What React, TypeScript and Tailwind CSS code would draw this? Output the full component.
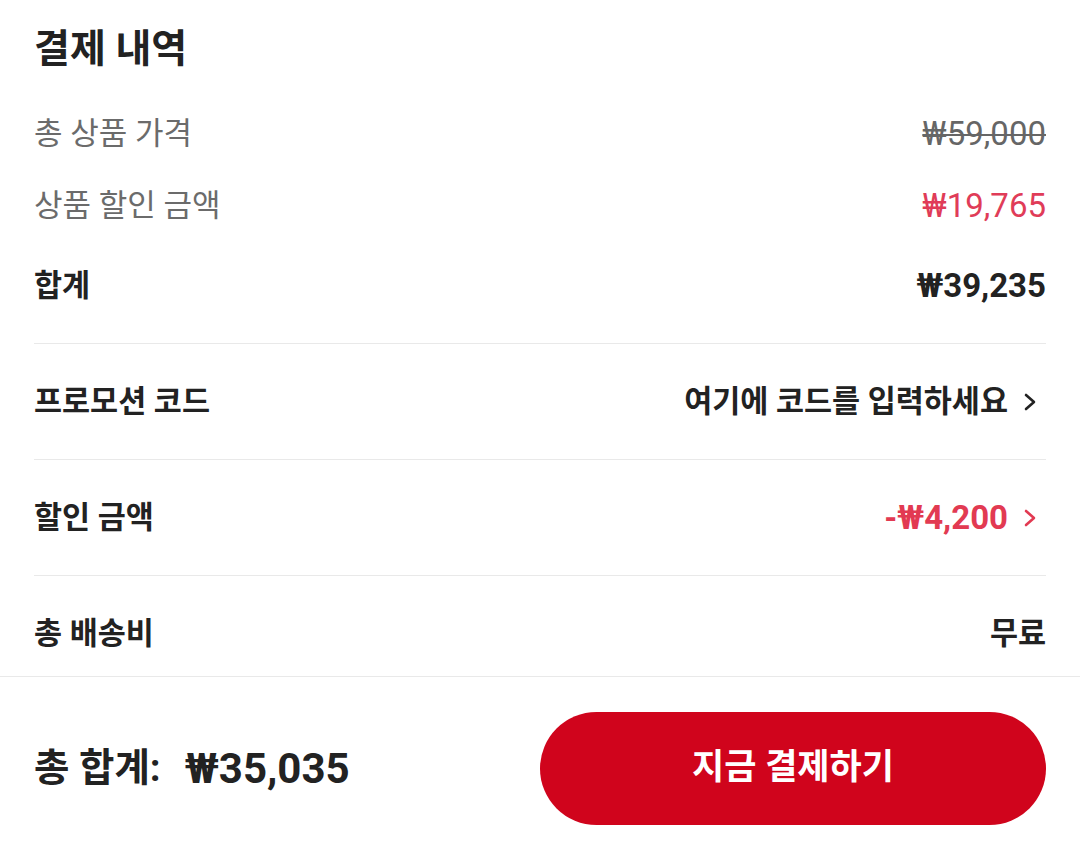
import React from 'react';

const Chevron: React.FC<{ className?: string }> = ({ className }) => (
  <svg width="14" height="20" viewBox="0 0 14 20" fill="none" className={className}>
    <path d="M3 3l8 7-8 7" stroke="currentColor" strokeWidth="2.6" strokeLinecap="round" strokeLinejoin="round" />
  </svg>
);

interface LineProps {
  label: string;
  value: string;
  valueClass?: string;
  chevron?: boolean;
  chevronClass?: string;
}

const DividedRow: React.FC<LineProps> = ({ label, value, valueClass, chevron, chevronClass }) => (
  <div className="flex h-[116px] shrink-0 items-center justify-between border-t border-[#e9e9e9]">
    <span className="text-[30.5px] font-bold text-[#222]">{label}</span>
    <div className="flex items-center">
      <span className={`font-bold ${valueClass ?? 'text-[30.5px] text-[#222]'}`}>{value}</span>
      {chevron && <Chevron className={`ml-[15px] mr-[9px] ${chevronClass ?? 'text-[#222]'}`} />}
    </div>
  </div>
);

export default function App() {
  return (
    <div className="flex h-[851px] w-[1080px] flex-col bg-white font-[Roboto,'Noto_Sans_CJK_KR',sans-serif] text-[#222]">
      <div className="flex h-[676px] shrink-0 flex-col overflow-hidden px-[34px]">
        <div className="flex h-[98px] shrink-0 items-center">
          <h2 className="text-[39px] font-bold">결제 내역</h2>
        </div>

        <div className="flex h-[72px] shrink-0 items-center justify-between">
          <span className="text-[31px] text-[#6b6b6b]">총 상품 가격</span>
          <span className="text-[33px] text-[#666] line-through decoration-2">₩59,000</span>
        </div>
        <div className="flex h-[72px] shrink-0 items-center justify-between">
          <span className="text-[31px] text-[#6b6b6b]">상품 할인 금액</span>
          <span className="text-[33px] text-[#e03c58]">₩19,765</span>
        </div>
        <div className="mb-[13px] flex h-[88px] shrink-0 items-center justify-between">
          <span className="text-[30.5px] font-bold">합계</span>
          <span className="text-[33px] font-bold">₩39,235</span>
        </div>

        <DividedRow label="프로모션 코드" value="여기에 코드를 입력하세요" chevron />
        <DividedRow
          label="할인 금액"
          value="-₩4,200"
          valueClass="text-[33px] text-[#e23a52]"
          chevron
          chevronClass="text-[#e23a52]"
        />
        <DividedRow label="총 배송비" value="무료" />
      </div>

      <div className="flex flex-1 items-center justify-between border-t border-[#e9e9e9] px-[34px] pt-[8px]">
        <div className="flex items-center font-bold">
          <span className="text-[38.5px]">총 합계:</span>
          <span className="ml-[24px] text-[42px]">₩35,035</span>
        </div>
        <button className="flex h-[113px] w-[506px] items-center justify-center rounded-full bg-[#d0041c] text-[35px] font-bold text-white">
          지금 결제하기
        </button>
      </div>
    </div>
  );
}
